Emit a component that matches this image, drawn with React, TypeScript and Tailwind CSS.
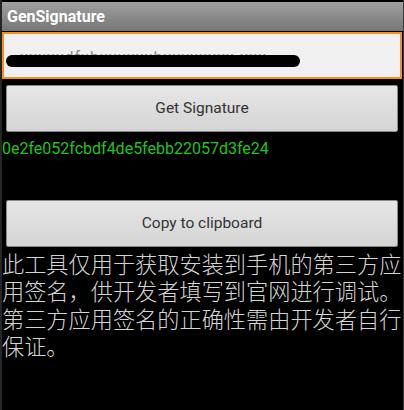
import React from "react";

export default function App() {
  return (
    <div className="w-[404px] h-[410px] bg-black flex flex-col border-l-2 border-l-[#262626] border-r border-r-[#3a3a3a] overflow-hidden" style={{ fontFamily: "Roboto, 'Noto Sans', sans-serif" }}>
      <div className="mt-[2px] h-[29px] bg-gradient-to-b from-[#a0a0a0] to-[#767676] flex items-center pl-[5px]">
        <span className="text-white font-bold text-[16px] leading-none">GenSignature</span>
      </div>
      <div className="mt-[1px] mr-[1px] h-[47px] border-2 border-[#f5901c] bg-[#f0f0f0] flex items-end pb-[10px] pl-[2px]">
        <div className="relative w-[294px] h-[12px]">
          <span className="absolute left-[14px] -top-[5px] text-[16px] text-[#8a8a8a] leading-none tracking-[1px]">xxxxxdfxhxxxxxxhxxxxxxxx.xxx</span>
          <div className="absolute inset-0 bg-black rounded-full" />
        </div>
      </div>
      <button className="mt-[6px] ml-[4px] mr-[5px] h-[47px] rounded-[2px] border border-[#8a8a8a] bg-gradient-to-b from-[#e6e6e6] to-[#d4d4d4] text-[#333] text-[15.5px] flex items-center justify-center">
        Get Signature
      </button>
      <div className="mt-[8px] text-[16px] leading-[17px] text-[#1fc41f]">0e2fe052fcbdf4de5febb22057d3fe24</div>
      <button className="mt-[43px] ml-[4px] mr-[5px] h-[47px] rounded-[2px] border border-[#8a8a8a] bg-gradient-to-b from-[#e6e6e6] to-[#d4d4d4] text-[#333] text-[15.5px] flex items-center justify-center">
        Copy to clipboard
      </button>
      <div className="mt-[3px] text-[22.2px] leading-[27.3px] text-[#d4d4d4] font-light" style={{ fontFamily: "'Noto Sans CJK SC', sans-serif" }}>
        此工具仅用于获取安装到手机的第三方应用签名，供开发者填写到官网进行调试。第三方应用签名的正确性需由开发者自行保证。
      </div>
    </div>
  );
}
